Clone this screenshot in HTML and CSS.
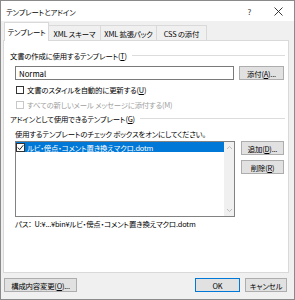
FILE: index.html
```html
<!DOCTYPE html>
<html lang="ja">
<head>
<meta charset="utf-8">
<link rel="stylesheet" href="styles.css">
</head>
<body>
<div class="window">
  <div class="titlebar">
    <span class="title">テンプレートとアドイン</span>
    <span class="help">?</span>
    <svg class="close" width="9" height="9" viewBox="0 0 9 9"><path d="M0.5 0.5L8.5 8.5M8.5 0.5L0.5 8.5" stroke="#222" stroke-width="0.9" fill="none"/></svg>
  </div>
  <div class="tabs">
    <div class="tab active">テンプレート</div>
    <div class="tab">XML スキーマ</div>
    <div class="tab">XML 拡張パック</div>
    <div class="tab">CSS の添付</div>
  </div>
  <div class="panel">
    <div class="group-head"><span>文書の作成に使用するテンプレート(<u>T</u>)</span><i class="rule"></i></div>
    <div class="row-input">
      <div class="input">Normal</div>
      <div class="btn btn-attach">添付(<u>A</u>)...</div>
    </div>
    <div class="check-row"><span class="box"></span><span>文書のスタイルを自動的に更新する(<u>U</u>)</span></div>
    <div class="check-row disabled"><span class="box"></span><span>すべての新しいメール メッセージに添付する(M)</span></div>
    <div class="group-head second"><span>アドインとして使用できるテンプレート(<u>G</u>)</span><i class="rule"></i></div>
    <div class="label">使用するテンプレートのチェック ボックスをオンにしてください。</div>
    <div class="list-row">
      <div class="listbox">
        <div class="items">
          <div class="item selected">
            <span class="cbox"><svg width="7" height="7" viewBox="0 0 7 7"><path d="M0.8 3.6L2.7 5.6L6.3 1.2" stroke="#222" stroke-width="1" fill="none"/></svg></span>
            <span>ルビ・傍点・コメント置き換えマクロ.dotm</span>
          </div>
        </div>
        <div class="scrollbar">
          <svg width="7" height="5" viewBox="0 0 7 5"><path d="M1 4L3.5 1.5L6 4" stroke="#b0b0b0" stroke-width="0.8" fill="none"/></svg>
          <svg width="7" height="5" viewBox="0 0 7 5"><path d="M1 1L3.5 3.5L6 1" stroke="#b0b0b0" stroke-width="0.8" fill="none"/></svg>
        </div>
      </div>
      <div class="side-buttons">
        <div class="btn">追加(<u>D</u>)...</div>
        <div class="btn">削除(<u>R</u>)</div>
      </div>
    </div>
    <div class="path">パス：&nbsp; U:¥...¥bin¥ルビ・傍点・コメント置き換えマクロ.dotm</div>
  </div>
  <div class="footer">
    <div class="btn btn-organizer">構成内容変更(<u>O</u>)...</div>
    <div class="spacer"></div>
    <div class="btn btn-ok">OK</div>
    <div class="btn btn-cancel">キャンセル</div>
  </div>
</div>
</body>
</html>
```
FILE: styles.css
```css
* { box-sizing: border-box; }
html, body { margin: 0; padding: 0; background: #ffffff; }
body {
  font-family: "Noto Sans CJK JP", "Noto Sans", sans-serif;
  font-feature-settings: "palt";
  font-size: 7.4px;
  letter-spacing: -0.2px;
  line-height: 11px;
  color: #000;
}
u { text-decoration: underline; text-underline-offset: 1px; }
.window {
  width: 295px;
  height: 300px;
  border: 1px solid #8a8a8a;
  background: #f0f0f0;
  display: flex;
  flex-direction: column;
}
.titlebar {
  height: 20px;
  background: #ffffff;
  display: flex;
  align-items: center;
  padding-left: 5px;
  flex: none;
}
.title { flex: 1; }
.help { font-size: 8px; color: #333; margin-right: 23px; }
.close { margin-right: 11px; }
.tabs {
  display: flex;
  align-items: flex-end;
  height: 19px;
  padding-left: 3px;
  flex: none;
  position: relative;
  z-index: 1;
}
.tab {
  height: 15px;
  padding: 0 3px;
  border: 1px solid #d9d9d9;
  border-bottom: none;
  background: #f0f0f0;
  display: flex;
  align-items: center;
  justify-content: center;
  white-space: nowrap;
}
.tab + .tab { margin-left: -1px; }
.tab.active {
  width: 45px;
  background: #ffffff;
  margin-bottom: -1px;
  height: 19px;
  padding-bottom: 1px;
  position: relative;
  z-index: 2;
}
.tab:nth-child(2) { width: 53px; }
.tab:nth-child(3) { width: 57px; }
.tab:nth-child(4) { width: 51px; }
.panel {
  flex: none;
  height: 233px;
  margin: 0 5px 0 2px;
  background: #ffffff;
  border: 1px solid #d9d9d9;
  padding: 0 3px 0 6px;
  display: flex;
  flex-direction: column;
}
.group-head {
  margin-top: 9px;
  display: flex;
  align-items: center;
  white-space: nowrap;
}
.group-head.second { margin-top: 3px; }
.rule {
  flex: 1;
  height: 1px;
  background: #dcdcdc;
  margin-left: 5px;
}
.row-input {
  margin-top: 5px;
  padding-left: 5px;
  display: flex;
  gap: 5px;
}
.input {
  width: 219px;
  height: 14px;
  border: 1px solid #7a7a7a;
  background: #fff;
  padding-left: 3px;
  display: flex;
  align-items: center;
  font-size: 7.8px;
  letter-spacing: 0;
}
.btn {
  height: 14px;
  border: 1px solid #adadad;
  background: #e1e1e1;
  display: flex;
  align-items: center;
  justify-content: center;
  white-space: nowrap;
}
.btn-attach { width: 45px; }
.check-row {
  margin-top: 4px;
  padding-left: 6px;
  display: flex;
  align-items: center;
  height: 11px;
}
.check-row .box {
  width: 8px;
  height: 8px;
  border: 1px solid #333;
  background: #fff;
  margin-right: 3px;
}
.check-row.disabled { color: #a0a0a0; }
.check-row.disabled .box { border-color: #c8c8c8; }
.label {
  margin-top: 4px;
  padding-left: 5px;
  white-space: nowrap;
}
.list-row {
  margin-top: 2px;
  padding-left: 5px;
  display: flex;
  gap: 6px;
}
.listbox {
  width: 220px;
  height: 76px;
  border: 1px solid #828282;
  background: #fff;
  display: flex;
}
.items { flex: 1; }
.item {
  height: 10px;
  display: flex;
  align-items: center;
  white-space: nowrap;
}
.item.selected { background: #0078d7; color: #fff; }
.cbox {
  width: 9px;
  height: 9px;
  border: 1px solid #333;
  background: #fff;
  margin-right: 2px;
  display: flex;
  align-items: center;
  justify-content: center;
}
.scrollbar {
  width: 10px;
  background: #f0f0f0;
  display: flex;
  flex-direction: column;
  justify-content: space-between;
  align-items: center;
  padding: 3px 0 3px;
}
.side-buttons {
  display: flex;
  flex-direction: column;
  gap: 5px;
}
.side-buttons .btn { width: 43px; }
.path {
  margin-top: 1px;
  padding-left: 5px;
  white-space: nowrap;
}
.footer {
  display: flex;
  padding: 5px 7px 0 3px;
  gap: 5px;
}
.footer .btn { height: 14px; }
.spacer { flex: 1; }
.btn-organizer { width: 73px; }
.btn-ok { width: 45px; border-color: #0078d7; }
.btn-cancel { width: 42px; }
```
